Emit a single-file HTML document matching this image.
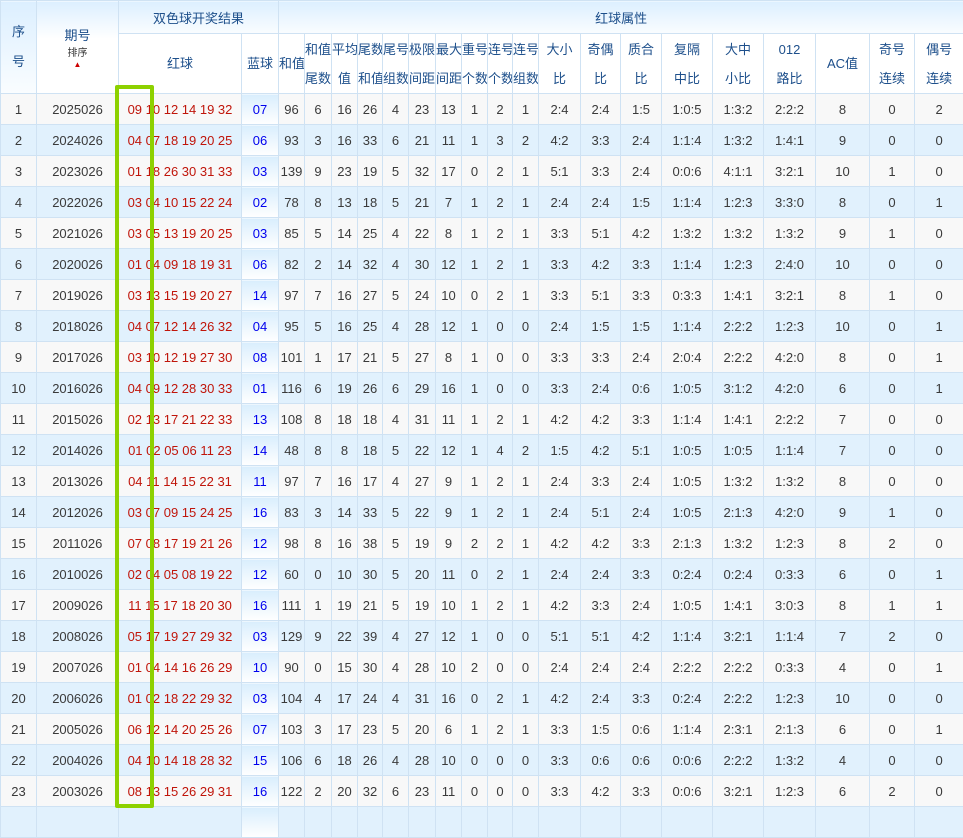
<!DOCTYPE html>
<html><head><meta charset="utf-8"><style>
body{margin:0;background:#fff;width:963px;height:815px;overflow:hidden;font-family:"Liberation Sans","Noto Sans CJK SC",sans-serif;}
table{border-collapse:collapse;table-layout:fixed;position:absolute;left:0;top:0;width:963px;}
td,th{border:1px solid #cfe2f3;text-align:center;padding:0;font-size:13px;color:#3a3a3a;font-weight:normal;overflow:hidden;white-space:nowrap;}
th{color:#1d4f8b;background:#fff;}
th.top{background:linear-gradient(#dcefff,#fafdff);height:32px;}
th.h2{height:59px;line-height:29px;}
tr.d td{height:30px;}
tr.d:nth-child(even) td{background:#e1f1fd;}
tr.d:nth-child(odd) td{background:#f8f8f8;}
tr.d td.b{background:linear-gradient(#d9eefd,#fff)!important;color:#0000ee;}
td.r{color:#c0150a;}
#box{position:absolute;left:115px;top:85px;width:31px;height:715px;border:4px solid #8dd100;border-radius:2px;}
</style></head><body>
<table>
<colgroup><col style="width:36px"><col style="width:82px"><col style="width:123px"><col style="width:37px"><col style="width:26px"><col style="width:27px"><col style="width:26px"><col style="width:25px"><col style="width:26px"><col style="width:27px"><col style="width:26px"><col style="width:26px"><col style="width:25px"><col style="width:26px"><col style="width:42px"><col style="width:40px"><col style="width:41px"><col style="width:51px"><col style="width:51px"><col style="width:52px"><col style="width:54px"><col style="width:45px"><col style="width:49px"></colgroup>
<tr><th rowspan="2" class="top" style="line-height:30px">序<br>号</th><th rowspan="2" style="background:linear-gradient(#dcefff,#fff 40%)">期号<br><span style="font-size:10px;color:#333;line-height:14px">排序<br><span style="color:#c00;font-size:8px;line-height:8px;display:block">▲</span></span></th><th colspan="2" class="top">双色球开奖结果</th><th colspan="19" class="top">红球属性</th></tr>
<tr><th class="h2">红球</th><th class="h2">蓝球</th><th class="h2">和值</th><th class="h2">和值<br>尾数</th><th class="h2">平均<br>值</th><th class="h2">尾数<br>和值</th><th class="h2">尾号<br>组数</th><th class="h2">极限<br>间距</th><th class="h2">最大<br>间距</th><th class="h2">重号<br>个数</th><th class="h2">连号<br>个数</th><th class="h2">连号<br>组数</th><th class="h2">大小<br>比</th><th class="h2">奇偶<br>比</th><th class="h2">质合<br>比</th><th class="h2">复隔<br>中比</th><th class="h2">大中<br>小比</th><th class="h2">012<br>路比</th><th class="h2">AC值</th><th class="h2">奇号<br>连续</th><th class="h2">偶号<br>连续</th></tr>
<tr class="d"><td>1</td><td>2025026</td><td class="r">09 10 12 14 19 32</td><td class="b">07</td><td>96</td><td>6</td><td>16</td><td>26</td><td>4</td><td>23</td><td>13</td><td>1</td><td>2</td><td>1</td><td>2:4</td><td>2:4</td><td>1:5</td><td>1:0:5</td><td>1:3:2</td><td>2:2:2</td><td>8</td><td>0</td><td>2</td></tr>
<tr class="d"><td>2</td><td>2024026</td><td class="r">04 07 18 19 20 25</td><td class="b">06</td><td>93</td><td>3</td><td>16</td><td>33</td><td>6</td><td>21</td><td>11</td><td>1</td><td>3</td><td>2</td><td>4:2</td><td>3:3</td><td>2:4</td><td>1:1:4</td><td>1:3:2</td><td>1:4:1</td><td>9</td><td>0</td><td>0</td></tr>
<tr class="d"><td>3</td><td>2023026</td><td class="r">01 18 26 30 31 33</td><td class="b">03</td><td>139</td><td>9</td><td>23</td><td>19</td><td>5</td><td>32</td><td>17</td><td>0</td><td>2</td><td>1</td><td>5:1</td><td>3:3</td><td>2:4</td><td>0:0:6</td><td>4:1:1</td><td>3:2:1</td><td>10</td><td>1</td><td>0</td></tr>
<tr class="d"><td>4</td><td>2022026</td><td class="r">03 04 10 15 22 24</td><td class="b">02</td><td>78</td><td>8</td><td>13</td><td>18</td><td>5</td><td>21</td><td>7</td><td>1</td><td>2</td><td>1</td><td>2:4</td><td>2:4</td><td>1:5</td><td>1:1:4</td><td>1:2:3</td><td>3:3:0</td><td>8</td><td>0</td><td>1</td></tr>
<tr class="d"><td>5</td><td>2021026</td><td class="r">03 05 13 19 20 25</td><td class="b">03</td><td>85</td><td>5</td><td>14</td><td>25</td><td>4</td><td>22</td><td>8</td><td>1</td><td>2</td><td>1</td><td>3:3</td><td>5:1</td><td>4:2</td><td>1:3:2</td><td>1:3:2</td><td>1:3:2</td><td>9</td><td>1</td><td>0</td></tr>
<tr class="d"><td>6</td><td>2020026</td><td class="r">01 04 09 18 19 31</td><td class="b">06</td><td>82</td><td>2</td><td>14</td><td>32</td><td>4</td><td>30</td><td>12</td><td>1</td><td>2</td><td>1</td><td>3:3</td><td>4:2</td><td>3:3</td><td>1:1:4</td><td>1:2:3</td><td>2:4:0</td><td>10</td><td>0</td><td>0</td></tr>
<tr class="d"><td>7</td><td>2019026</td><td class="r">03 13 15 19 20 27</td><td class="b">14</td><td>97</td><td>7</td><td>16</td><td>27</td><td>5</td><td>24</td><td>10</td><td>0</td><td>2</td><td>1</td><td>3:3</td><td>5:1</td><td>3:3</td><td>0:3:3</td><td>1:4:1</td><td>3:2:1</td><td>8</td><td>1</td><td>0</td></tr>
<tr class="d"><td>8</td><td>2018026</td><td class="r">04 07 12 14 26 32</td><td class="b">04</td><td>95</td><td>5</td><td>16</td><td>25</td><td>4</td><td>28</td><td>12</td><td>1</td><td>0</td><td>0</td><td>2:4</td><td>1:5</td><td>1:5</td><td>1:1:4</td><td>2:2:2</td><td>1:2:3</td><td>10</td><td>0</td><td>1</td></tr>
<tr class="d"><td>9</td><td>2017026</td><td class="r">03 10 12 19 27 30</td><td class="b">08</td><td>101</td><td>1</td><td>17</td><td>21</td><td>5</td><td>27</td><td>8</td><td>1</td><td>0</td><td>0</td><td>3:3</td><td>3:3</td><td>2:4</td><td>2:0:4</td><td>2:2:2</td><td>4:2:0</td><td>8</td><td>0</td><td>1</td></tr>
<tr class="d"><td>10</td><td>2016026</td><td class="r">04 09 12 28 30 33</td><td class="b">01</td><td>116</td><td>6</td><td>19</td><td>26</td><td>6</td><td>29</td><td>16</td><td>1</td><td>0</td><td>0</td><td>3:3</td><td>2:4</td><td>0:6</td><td>1:0:5</td><td>3:1:2</td><td>4:2:0</td><td>6</td><td>0</td><td>1</td></tr>
<tr class="d"><td>11</td><td>2015026</td><td class="r">02 13 17 21 22 33</td><td class="b">13</td><td>108</td><td>8</td><td>18</td><td>18</td><td>4</td><td>31</td><td>11</td><td>1</td><td>2</td><td>1</td><td>4:2</td><td>4:2</td><td>3:3</td><td>1:1:4</td><td>1:4:1</td><td>2:2:2</td><td>7</td><td>0</td><td>0</td></tr>
<tr class="d"><td>12</td><td>2014026</td><td class="r">01 02 05 06 11 23</td><td class="b">14</td><td>48</td><td>8</td><td>8</td><td>18</td><td>5</td><td>22</td><td>12</td><td>1</td><td>4</td><td>2</td><td>1:5</td><td>4:2</td><td>5:1</td><td>1:0:5</td><td>1:0:5</td><td>1:1:4</td><td>7</td><td>0</td><td>0</td></tr>
<tr class="d"><td>13</td><td>2013026</td><td class="r">04 11 14 15 22 31</td><td class="b">11</td><td>97</td><td>7</td><td>16</td><td>17</td><td>4</td><td>27</td><td>9</td><td>1</td><td>2</td><td>1</td><td>2:4</td><td>3:3</td><td>2:4</td><td>1:0:5</td><td>1:3:2</td><td>1:3:2</td><td>8</td><td>0</td><td>0</td></tr>
<tr class="d"><td>14</td><td>2012026</td><td class="r">03 07 09 15 24 25</td><td class="b">16</td><td>83</td><td>3</td><td>14</td><td>33</td><td>5</td><td>22</td><td>9</td><td>1</td><td>2</td><td>1</td><td>2:4</td><td>5:1</td><td>2:4</td><td>1:0:5</td><td>2:1:3</td><td>4:2:0</td><td>9</td><td>1</td><td>0</td></tr>
<tr class="d"><td>15</td><td>2011026</td><td class="r">07 08 17 19 21 26</td><td class="b">12</td><td>98</td><td>8</td><td>16</td><td>38</td><td>5</td><td>19</td><td>9</td><td>2</td><td>2</td><td>1</td><td>4:2</td><td>4:2</td><td>3:3</td><td>2:1:3</td><td>1:3:2</td><td>1:2:3</td><td>8</td><td>2</td><td>0</td></tr>
<tr class="d"><td>16</td><td>2010026</td><td class="r">02 04 05 08 19 22</td><td class="b">12</td><td>60</td><td>0</td><td>10</td><td>30</td><td>5</td><td>20</td><td>11</td><td>0</td><td>2</td><td>1</td><td>2:4</td><td>2:4</td><td>3:3</td><td>0:2:4</td><td>0:2:4</td><td>0:3:3</td><td>6</td><td>0</td><td>1</td></tr>
<tr class="d"><td>17</td><td>2009026</td><td class="r">11 15 17 18 20 30</td><td class="b">16</td><td>111</td><td>1</td><td>19</td><td>21</td><td>5</td><td>19</td><td>10</td><td>1</td><td>2</td><td>1</td><td>4:2</td><td>3:3</td><td>2:4</td><td>1:0:5</td><td>1:4:1</td><td>3:0:3</td><td>8</td><td>1</td><td>1</td></tr>
<tr class="d"><td>18</td><td>2008026</td><td class="r">05 17 19 27 29 32</td><td class="b">03</td><td>129</td><td>9</td><td>22</td><td>39</td><td>4</td><td>27</td><td>12</td><td>1</td><td>0</td><td>0</td><td>5:1</td><td>5:1</td><td>4:2</td><td>1:1:4</td><td>3:2:1</td><td>1:1:4</td><td>7</td><td>2</td><td>0</td></tr>
<tr class="d"><td>19</td><td>2007026</td><td class="r">01 04 14 16 26 29</td><td class="b">10</td><td>90</td><td>0</td><td>15</td><td>30</td><td>4</td><td>28</td><td>10</td><td>2</td><td>0</td><td>0</td><td>2:4</td><td>2:4</td><td>2:4</td><td>2:2:2</td><td>2:2:2</td><td>0:3:3</td><td>4</td><td>0</td><td>1</td></tr>
<tr class="d"><td>20</td><td>2006026</td><td class="r">01 02 18 22 29 32</td><td class="b">03</td><td>104</td><td>4</td><td>17</td><td>24</td><td>4</td><td>31</td><td>16</td><td>0</td><td>2</td><td>1</td><td>4:2</td><td>2:4</td><td>3:3</td><td>0:2:4</td><td>2:2:2</td><td>1:2:3</td><td>10</td><td>0</td><td>0</td></tr>
<tr class="d"><td>21</td><td>2005026</td><td class="r">06 12 14 20 25 26</td><td class="b">07</td><td>103</td><td>3</td><td>17</td><td>23</td><td>5</td><td>20</td><td>6</td><td>1</td><td>2</td><td>1</td><td>3:3</td><td>1:5</td><td>0:6</td><td>1:1:4</td><td>2:3:1</td><td>2:1:3</td><td>6</td><td>0</td><td>1</td></tr>
<tr class="d"><td>22</td><td>2004026</td><td class="r">04 10 14 18 28 32</td><td class="b">15</td><td>106</td><td>6</td><td>18</td><td>26</td><td>4</td><td>28</td><td>10</td><td>0</td><td>0</td><td>0</td><td>3:3</td><td>0:6</td><td>0:6</td><td>0:0:6</td><td>2:2:2</td><td>1:3:2</td><td>4</td><td>0</td><td>0</td></tr>
<tr class="d"><td>23</td><td>2003026</td><td class="r">08 13 15 26 29 31</td><td class="b">16</td><td>122</td><td>2</td><td>20</td><td>32</td><td>6</td><td>23</td><td>11</td><td>0</td><td>0</td><td>0</td><td>3:3</td><td>4:2</td><td>3:3</td><td>0:0:6</td><td>3:2:1</td><td>1:2:3</td><td>6</td><td>2</td><td>0</td></tr>
<tr class="d"><td></td><td></td><td></td><td class="b"></td><td></td><td></td><td></td><td></td><td></td><td></td><td></td><td></td><td></td><td></td><td></td><td></td><td></td><td></td><td></td><td></td><td></td><td></td><td></td></tr>
</table>
<div id="box"></div>
</body></html>
